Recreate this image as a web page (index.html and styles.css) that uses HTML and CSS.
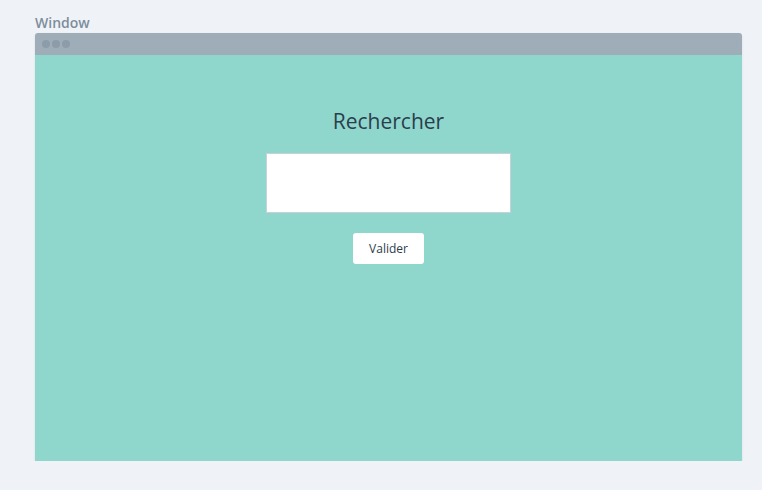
FILE: index.html
```html
<!DOCTYPE html>
<html>
<head>
<meta charset="utf-8">
<link rel="stylesheet" href="styles.css">
</head>
<body>
<div class="page">
  <div class="label">Window</div>
  <div class="window">
    <div class="titlebar">
      <span class="dot"></span><span class="dot"></span><span class="dot"></span>
    </div>
    <div class="content">
      <h1 class="title">Rechercher</h1>
      <div class="field"></div>
      <div class="button">Valider</div>
    </div>
  </div>
</div>
</body>
</html>
```
FILE: styles.css
```css
html, body {
  margin: 0;
  padding: 0;
  background: #eff3f7;
  font-family: "Open Sans", "DejaVu Sans", sans-serif;
}
.page {
  padding: 13px 20px 0 35px;
}
.label {
  font-size: 14px;
  font-weight: 600;
  color: #7d8d9b;
  line-height: 20px;
  height: 20px;
}
.window {
  width: 707px;
  height: 428px;
  border-radius: 3px 3px 0 0;
  overflow: hidden;
  box-shadow: 0 1px 3px rgba(0,0,0,0.08);
  display: flex;
  flex-direction: column;
}
.titlebar {
  height: 22px;
  background: #9eadb8;
  display: flex;
  align-items: center;
  gap: 2px;
  padding-left: 7px;
  flex: none;
}
.dot {
  width: 8px;
  height: 8px;
  border-radius: 50%;
  background: #8c9ca8;
}
.content {
  flex: 1;
  background: #8fd7cd;
  display: flex;
  flex-direction: column;
  align-items: center;
}
.title {
  margin: 51px 0 0;
  font-size: 21px;
  font-weight: 400;
  color: #2b3e4c;
  line-height: 30px;
}
.field {
  margin-top: 17px;
  width: 243px;
  height: 58px;
  background: #fff;
  border: 1px solid #c9d1d8;
}
.button {
  margin-top: 20px;
  width: 71px;
  height: 31px;
  background: #fff;
  border-radius: 3px;
  font-size: 12px;
  color: #2b3e4c;
  display: flex;
  align-items: center;
  justify-content: center;
}
```
